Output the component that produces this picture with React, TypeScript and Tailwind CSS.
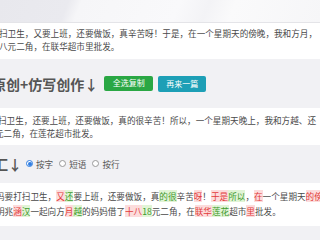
const font = "font-['Noto_Sans_CJK_SC','Noto_Sans',sans-serif]";

function Del({ children }: { children: React.ReactNode }) {
  return <span className="bg-[#fcdcdc] text-[#e23b3b]">{children}</span>;
}

function Ins({ children }: { children: React.ReactNode }) {
  return <span className="bg-[#e1f4d6] text-[#3f9a2c]">{children}</span>;
}

function Radio({ label, checked }: { label: string; checked?: boolean }) {
  return (
    <label className="flex items-center gap-[3px]">
      <span
        className={`flex h-[7px] w-[7px] items-center justify-center rounded-full border ${
          checked ? 'border-[#2f7de1] bg-white' : 'border-[#9a9a9a] bg-white'
        }`}
      >
        {checked && <span className="h-[4px] w-[4px] rounded-full bg-[#2f7de1]" />}
      </span>
      <span>{label}</span>
    </label>
  );
}

export default function App() {
  return (
    <div className={`w-[320px] h-[240px] overflow-hidden bg-[#f1f1f4] ${font}`}>
      {/* header strip */}
      <div className="h-[23px] bg-[linear-gradient(112deg,#e8e8ed_0%,#eaeaef_21%,#f6f6f8_25%,#f9f9fb_55%,#f3f3f6_64%,#fafafb_72%,#f6f6f8_100%)] border-b border-[#e4e4e8]" />

      {/* original text */}
      <div className="bg-white pt-[4px] pb-[6px] text-[8.6px] leading-[13px] text-[#4a4a4a] overflow-hidden">
        <div className="whitespace-nowrap ml-[-1px]">扫卫生，又要上班，还要做饭，真辛苦呀！于是，在一个星期天的傍晚，我和方月，</div>
        <div className="whitespace-nowrap ml-[-1px]">八元二角，在联华超市里批发。</div>
      </div>

      {/* heading + buttons */}
      <div className="flex items-center h-[49px] overflow-hidden">
        <h2 className="whitespace-nowrap ml-[-8px] text-[14px] font-bold text-[#555] leading-none">原创+仿写创作↓</h2>
        <div className="flex gap-[5px] ml-[6px]">
          <button className="h-[15px] w-[49px] rounded-[2px] bg-[#2aa744] text-[8px] text-white leading-none">全选复制</button>
          <button className="h-[16px] w-[48px] rounded-[2px] bg-[#1d9fb6] text-[8px] text-white leading-none">再来一篇</button>
        </div>
      </div>

      {/* rewritten text */}
      <div className="bg-white pt-[6px] pb-[5px] text-[8.6px] leading-[13px] text-[#4a4a4a] overflow-hidden">
        <div className="whitespace-nowrap ml-[-2px]">扫卫生，还要上班，还要做饭，真的很辛苦！所以，一个星期天晚上，我和方越、还</div>
        <div className="whitespace-nowrap ml-[-5px]">元二角，在莲花超市批发。</div>
      </div>

      {/* compare heading */}
      <div className="flex items-center h-[38px] overflow-hidden">
        <h2 className="whitespace-nowrap ml-[-34px] text-[14px] font-bold text-[#555] leading-none">对比汇↓</h2>
        <div className="flex items-center gap-[6px] ml-[4px] text-[8.6px] text-[#555]">
          <Radio label="按字" checked />
          <Radio label="短语" />
          <Radio label="按行" />
        </div>
      </div>

      {/* diff */}
      <div className="bg-white pt-[6px] pb-[7px] text-[8.6px] leading-[15px] text-[#4a4a4a] overflow-hidden">
        <div className="whitespace-nowrap ml-[-4px]">
          妈要打扫卫生，<Del>又</Del><Ins>还</Ins>要上班，还要做饭，真<Ins>的很</Ins>辛苦<Del>呀</Del>！<Del>于是</Del><Ins>所以</Ins>，<Del>在</Del>一个星期天<Del>的傍</Del>晚
        </div>
        <div className="whitespace-nowrap ml-[-4px]">
          明兆<Del>涵</Del><Ins>汉</Ins>一起向方<Del>月</Del><Ins>越</Ins>的妈妈借了<Del>十八</Del><Ins>18</Ins>元二角，在<Del>联华</Del><Ins>莲花</Ins>超市<Del>里</Del>批发。
        </div>
      </div>
    </div>
  );
}
